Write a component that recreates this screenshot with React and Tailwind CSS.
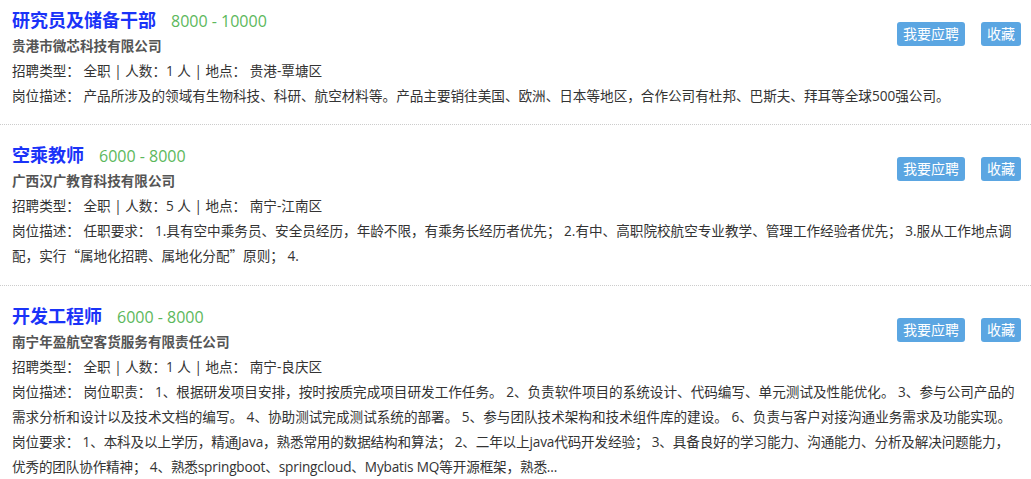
const jobs = [
  {
    title: '研究员及储备干部',
    salary: '8000 - 10000',
    company: '贵港市微芯科技有限公司',
    type: '全职',
    count: '1',
    place: '贵港-覃塘区',
    desc: [
      ['岗位描述：', '产品所涉及的领域有生物科技、科研、航空材料等。产品主要销往美国、欧洲、日本等地区，合作公司有杜邦、巴斯夫、拜耳等全球500强公司。'],
    ],
  },
  {
    title: '空乘教师',
    salary: '6000 - 8000',
    company: '广西汉广教育科技有限公司',
    type: '全职',
    count: '5',
    place: '南宁-江南区',
    desc: [
      ['岗位描述：', '任职要求： 1.具有空中乘务员、安全员经历，年龄不限，有乘务长经历者优先； 2.有中、高职院校航空专业教学、管理工作经验者优先； 3.服从工作地点调配，实行“属地化招聘、属地化分配”原则； 4.'],
    ],
  },
  {
    title: '开发工程师',
    salary: '6000 - 8000',
    company: '南宁年盈航空客货服务有限责任公司',
    type: '全职',
    count: '1',
    place: '南宁-良庆区',
    desc: [
      ['岗位描述：', '岗位职责： 1、根据研发项目安排，按时按质完成项目研发工作任务。 2、负责软件项目的系统设计、代码编写、单元测试及性能优化。 3、参与公司产品的需求分析和设计以及技术文档的编写。 4、协助测试完成测试系统的部署。 5、参与团队技术架构和技术组件库的建设。 6、负责与客户对接沟通业务需求及功能实现。'],
      ['岗位要求：', '1、本科及以上学历，精通Java，熟悉常用的数据结构和算法； 2、二年以上java代码开发经验； 3、具备良好的学习能力、沟通能力、分析及解决问题能力，优秀的团队协作精神； 4、熟悉springboot、springcloud、Mybatis MQ等开源框架，熟悉...', 'tracking-[-0.15px]'],
    ],
  },
];

// curly quotes are full width in the original font, so hand them to the CJK face
const withWideQuotes = (text) =>
  text.split(/([“”])/).map((part, i) =>
    part === '“' || part === '”' ? (
      <span key={i} className="font-['Noto_Sans_CJK_SC',sans-serif]">{part}</span>
    ) : (
      part
    )
  );

const JobItem = ({ job }) => (
  <div className="border-b border-dotted border-[#cccccc] pl-[12px] pr-[10px] pt-[17px] pb-[17px] first:pt-[7px] first:pb-[16px]">
    {/* action buttons */}
    <div className="float-right mt-[15px] flex gap-[16px]">
      <button className="h-[24px] px-[6px] rounded-[3px] bg-[#5ba6e2] text-white text-[14px] leading-[24px]">我要应聘</button>
      <button className="h-[24px] px-[6px] rounded-[3px] bg-[#5ba6e2] text-white text-[14px] leading-[24px]">收藏</button>
    </div>

    <div className="flex items-baseline h-[26px]">
      <h3 className="text-[18px] leading-[26px] font-bold text-[#1a33f8]">{job.title}</h3>
      <span className="ml-[15px] text-[16px] leading-[26px] text-[#5cb85c]">{job.salary}</span>
    </div>
    <p className="text-[13.6px] leading-[25px] font-bold text-[#555555]">{job.company}</p>
    <p className="text-[13.6px] leading-[25px] text-[#333333]">
      招聘类型： {job.type} | 人数：{job.count} 人 | 地点： {job.place}
    </p>
    {job.desc.map(([label, text, extra]) => (
      <p key={label} className={`text-[13.6px] leading-[25px] text-[#333333] ${extra || ''}`}>
        {label} {withWideQuotes(text)}
      </p>
    ))}
  </div>
);

export default function App() {
  return (
    <div className="bg-white min-h-screen font-['Open_Sans','Noto_Sans_CJK_SC',sans-serif]">
      {jobs.map((job) => (
        <JobItem key={job.title} job={job} />
      ))}
    </div>
  );
}
